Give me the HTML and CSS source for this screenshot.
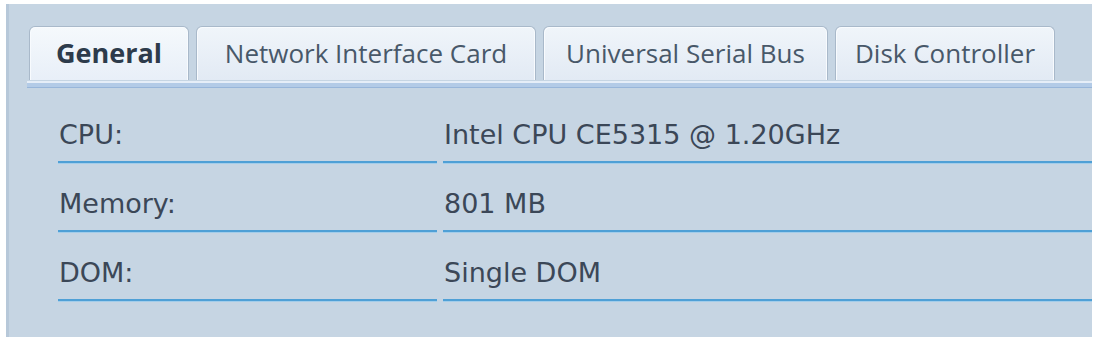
FILE: index.html
```html
<!DOCTYPE html>
<html>
<head>
<meta charset="utf-8">
<link rel="stylesheet" href="styles.css">
</head>
<body>
<div class="panel">
  <div class="tabs">
    <div class="tab active t1">General</div>
    <div class="tab t2">Network Interface Card</div>
    <div class="tab t3">Universal Serial Bus</div>
    <div class="tab t4">Disk Controller</div>
  </div>
  <div class="strip"></div>
  <div class="rows">
    <div class="row"><div class="label">CPU:</div><div class="value">Intel CPU CE5315 @ 1.20GHz</div></div>
    <div class="row"><div class="label">Memory:</div><div class="value">801 MB</div></div>
    <div class="row"><div class="label">DOM:</div><div class="value">Single DOM</div></div>
  </div>
</div>
</body>
</html>
```
FILE: styles.css
```css
html, body {
  margin: 0;
  padding: 0;
  background: #ffffff;
}
body {
  width: 1095px;
  height: 339px;
  overflow: hidden;
}
.panel {
  margin: 4px 0 0 6px;
  width: 1086px;
  height: 333px;
  background: #c6d5e3;
  border-left: 3px solid #b7c8d9;
  box-sizing: border-box;
  padding-top: 22px;
}
.tabs {
  display: flex;
  gap: 7px;
  padding-left: 20px;
  height: 54px;
}
.tab {
  box-sizing: border-box;
  height: 54px;
  border: 1px solid #a9b9ca;
  border-bottom: none;
  border-radius: 6px 6px 0 0;
  background: linear-gradient(#f0f5fa, #e2eaf4);
  box-shadow: inset 1px 1px 0 #f8fbfe, inset -1px 0 0 #f8fbfe;
  display: flex;
  align-items: center;
  justify-content: center;
  font-family: "Open Sans", sans-serif;
  font-size: 26px;
  color: #485869;
  padding-bottom: 2px;
}
.tab.active {
  background: linear-gradient(#f5f9fc, #e8eff8);
  font-weight: bold;
  font-size: 27px;
  color: #2d3b4b;
}
.t1 { width: 160px; }
.t2 { width: 340px; }
.t3 { width: 285px; }
.t4 { width: 220px; }
.strip {
  margin-left: 18px;
  margin-top: 1px;
  height: 7px;
  box-sizing: border-box;
  background: #b3cbe7;
  border-top: 2px solid #e6eef8;
  border-bottom: 1px solid #98b6da;
}
.rows {
  margin-top: 6px;
  margin-left: 49px;
}
.row {
  display: flex;
  gap: 6px;
  font-family: "DejaVu Sans", sans-serif;
  font-size: 27px;
  color: #3b4757;
}
.label, .value {
  padding: 26px 0 11px 1px;
  line-height: 30px;
  border-bottom: 2px solid #4fa0d6;
  box-shadow: 0 1px 0 #a3cdea;
}
.label { width: 378px; }
.value { flex: 1; }
```
